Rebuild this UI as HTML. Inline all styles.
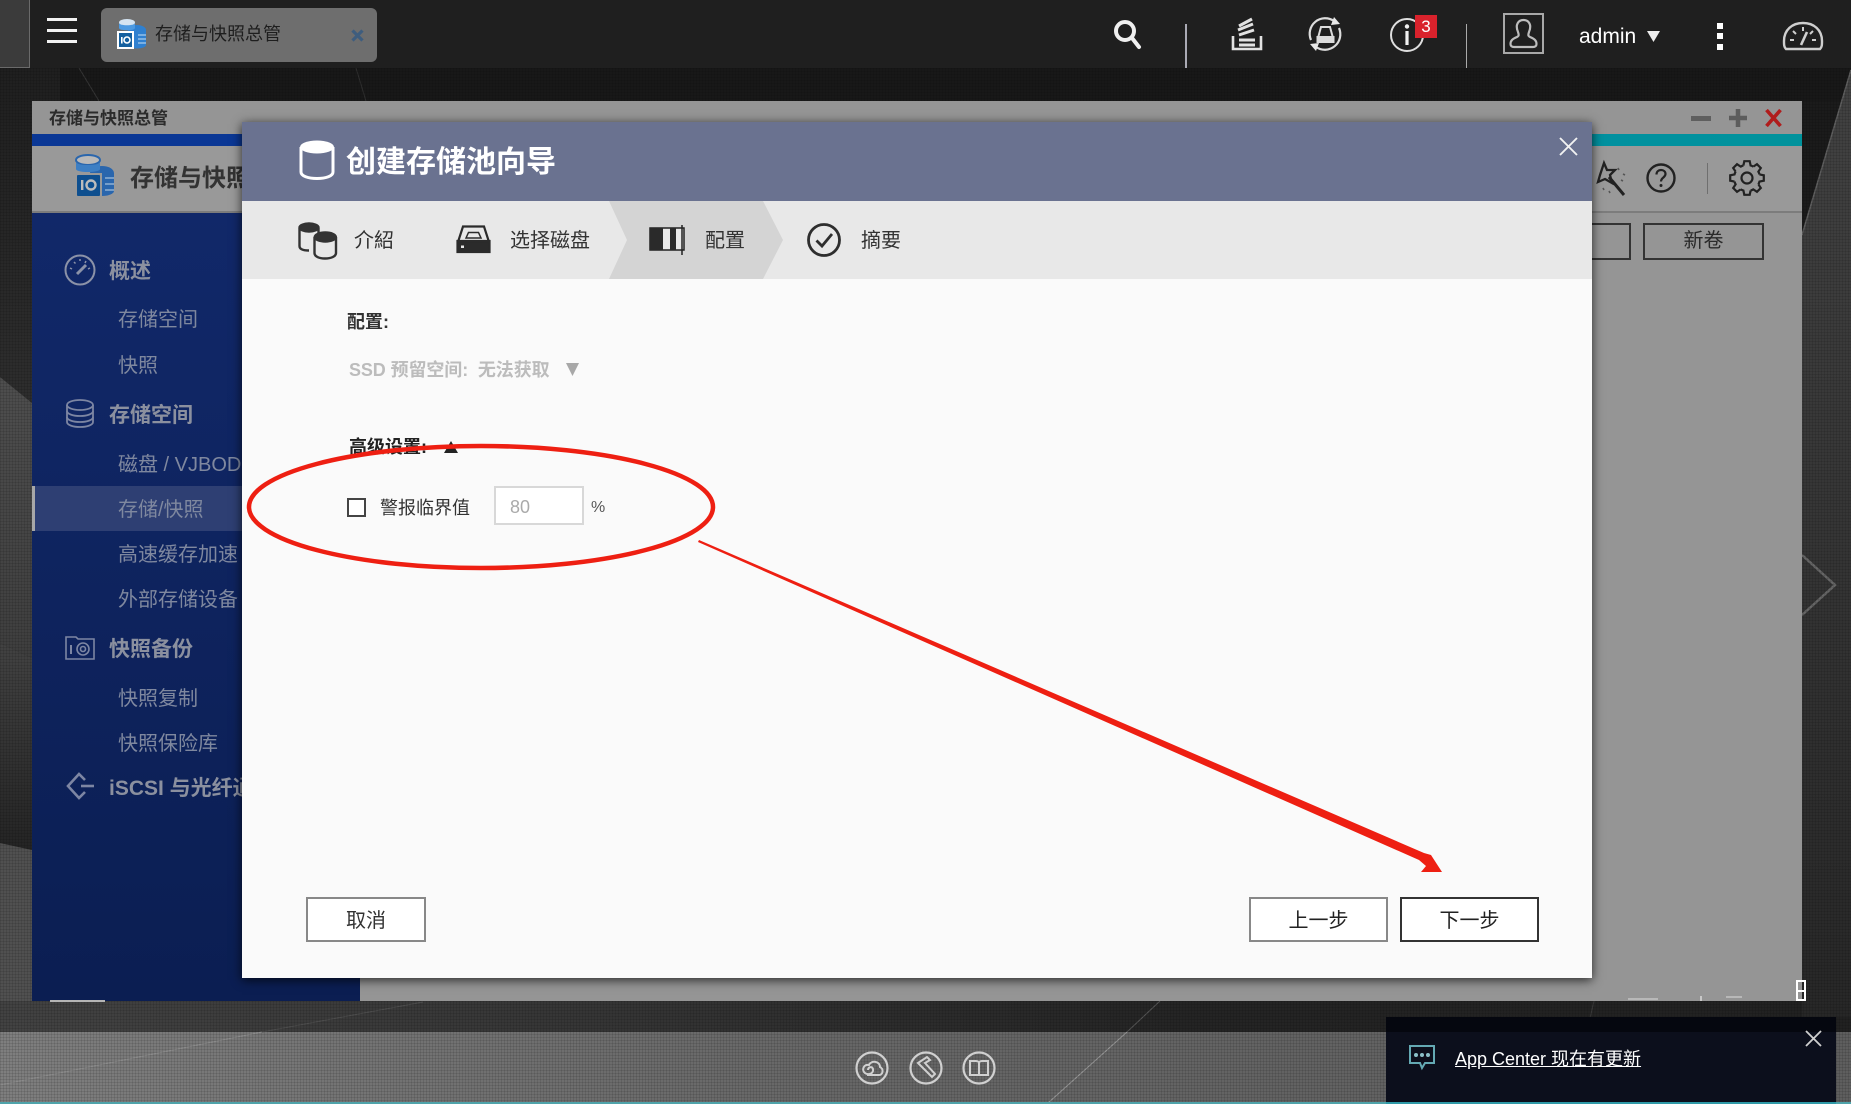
<!DOCTYPE html>
<html lang="zh"><head><meta charset="utf-8"><title>存储与快照总管</title>
<style>
html,body{margin:0;padding:0;width:1851px;height:1104px;overflow:hidden;background:#1b1b1b;font-family:"Liberation Sans","Noto Sans CJK SC",sans-serif}
.a{position:absolute}
.t{position:absolute;white-space:nowrap;line-height:1}
svg{position:absolute;overflow:visible}
.b{font-weight:700}
.s{font-size:20px;color:#7f889f;left:118px}
.h{font-size:21px;font-weight:700;color:#8b909f;left:109px}
.btn{position:absolute;box-sizing:border-box;background:#fff;border:2px solid #888;font-size:20px;color:#333;text-align:center}
</style></head><body>

<svg class="a" style="left:0;top:0" width="1851" height="1104">
<defs>
<linearGradient id="g1" x1="0" y1="0" x2="0" y2="1"><stop offset="0" stop-color="#1f1f1f"/><stop offset="1" stop-color="#2e2e2e"/></linearGradient>
<linearGradient id="g2" x1="0" y1="0" x2="0" y2="1"><stop offset="0" stop-color="#4e4e4e"/><stop offset="1" stop-color="#3e3e3e"/></linearGradient>
<linearGradient id="g3" x1="0" y1="0" x2="0" y2="1"><stop offset="0" stop-color="#424242"/><stop offset="1" stop-color="#242424"/></linearGradient>
<linearGradient id="g5" x1="0" y1="0" x2="0" y2="1"><stop offset="0" stop-color="#424242"/><stop offset=".6" stop-color="#323232"/><stop offset="1" stop-color="#272727"/></linearGradient>
<linearGradient id="g6" x1="0" y1="0" x2="1" y2="0"><stop offset="0" stop-color="#7e7e7e"/><stop offset=".45" stop-color="#666"/><stop offset="1" stop-color="#5e5e5e"/></linearGradient>
<linearGradient id="g7" x1="0" y1="0" x2="1" y2="0"><stop offset="0" stop-color="#424242"/><stop offset=".3" stop-color="#363636"/><stop offset=".65" stop-color="#242424"/><stop offset="1" stop-color="#212121"/></linearGradient>
</defs>
<rect x="0" y="68" width="1851" height="33" fill="#181818"/>
<polygon points="0,68 60,68 60,412 32,403 0,377" fill="url(#g1)"/>
<polygon points="0,377 32,403 32,658 0,643" fill="url(#g2)"/>
<polygon points="0,643 32,658 32,850 0,843" fill="url(#g3)"/>
<polygon points="0,843 32,850 32,1032 0,1032" fill="#505050"/>
<rect x="0" y="1001" width="1851" height="31" fill="url(#g7)"/>
<polygon points="1851,70 1802,235 1802,1017 1851,1017" fill="url(#g5)"/>
<line x1="1851" y1="70" x2="1802" y2="235" stroke="#5e5e5e" stroke-width="1.5"/>
<polyline points="1802,555 1835,585 1802,615" fill="none" stroke="#666" stroke-width="2.5"/>
<rect x="0" y="1032" width="1851" height="70" fill="url(#g6)"/>
<line x1="79" y1="68" x2="99" y2="101" stroke="#363636" stroke-width="1"/>
<line x1="356" y1="68" x2="366" y2="101" stroke="#303030" stroke-width="1"/>
<line x1="262" y1="1032" x2="423" y2="1002" stroke="#4e4e4e" stroke-width="1"/>
<line x1="0" y1="1085" x2="262" y2="1032" stroke="#8c8c8c" stroke-width="1"/>
<line x1="1160" y1="1001" x2="1127" y2="1032" stroke="#555" stroke-width="1"/>
<line x1="1127" y1="1032" x2="1048" y2="1103" stroke="#999" stroke-width="1"/>
<line x1="1594" y1="1001" x2="1570" y2="1104" stroke="#3a3a3a" stroke-width="1"/>
</svg>
<div class="a" style="left:0;top:68px;width:1851px;height:1036px;background-image:repeating-linear-gradient(0deg,rgba(0,0,0,.1) 0 1px,transparent 1px 3px),repeating-linear-gradient(90deg,rgba(0,0,0,.1) 0 1px,transparent 1px 3px)"></div>
<div class="a" style="left:0;top:1102px;width:1851px;height:2px;background:#4fa3aa"></div>

<!-- top bar -->
<div class="a" style="left:0;top:0;width:1851px;height:68px;background:#1f1f1f"></div>
<div class="a" style="left:0;top:0;width:29px;height:67px;background:#3b3b3b;border-right:1px solid #6a6a6a;border-bottom:1px solid #6a6a6a"></div>
<div class="a" style="left:47px;top:18px;width:30px;height:3px;background:#f2f2f2"></div>
<div class="a" style="left:47px;top:29px;width:30px;height:3px;background:#f2f2f2"></div>
<div class="a" style="left:47px;top:40px;width:30px;height:3px;background:#f2f2f2"></div>
<div class="a" style="left:101px;top:8px;width:276px;height:54px;background:#6e6e6e;border-radius:6px"></div>
<svg style="left:116px;top:18px" width="32" height="32" viewBox="0 0 32 32">
<ellipse cx="21" cy="12" rx="9" ry="5" fill="#2f80d0"/><rect x="12" y="12" width="18" height="15" fill="#2f80d0"/><ellipse cx="21" cy="27" rx="9" ry="3.500" fill="#2f80d0"/>
<path d="M22 17H30M22 21H30M22 25H30" stroke="#a9cdec" stroke-width="1.200"/>
<ellipse cx="11" cy="4.500" rx="8" ry="3.500" fill="#d4e4f2"/><path d="M3 5V10C3 13 19 13 19 10V5C19 8 3 8 3 5Z" fill="#4c9ae2"/>
<rect x="1" y="13" width="17" height="18" fill="#fff"/><rect x="3" y="15" width="13" height="14" fill="#15609f"/><rect x="5" y="19" width="1.600" height="6.500" fill="#fff"/><circle cx="11" cy="22" r="3" fill="none" stroke="#fff" stroke-width="1.600"/>
</svg>
<div class="t" style="left:155px;top:25px;font-size:18px;color:#1e1e1e">存储与快照总管</div>
<svg style="left:351px;top:29px" width="13" height="13" viewBox="0 0 13 13"><path d="M1.500 1.500L11.500 11.500M11.500 1.500L1.500 11.500" stroke="#3e5d7e" stroke-width="3.200"/></svg>

<!-- top right icons -->
<svg style="left:1112px;top:18px" width="32" height="32" viewBox="0 0 32 32" fill="none"><circle cx="13" cy="13" r="9" stroke="#f0f0f0" stroke-width="4"/><path d="M20 20L27 29" stroke="#f0f0f0" stroke-width="4" stroke-linecap="round"/></svg>
<div class="a" style="left:1185px;top:24px;width:2px;height:44px;background:#aaaab4"></div>
<svg style="left:1231px;top:17px" width="32" height="34" viewBox="0 0 32 34" fill="none" stroke="#e2e2e2"><path d="M2 19V32H30V19" stroke-width="2.600"/><path d="M8 9L21 2M7 13L22 7M8 18L23 13M8 23H24M8 28H24" stroke-width="3"/></svg>
<svg style="left:1307px;top:16px" width="36" height="36" viewBox="0 0 36 36" fill="none" stroke="#dcdcdc"><path d="M4 24A15.500 15.500 0 0 1 27 5" stroke-width="2.200"/><path d="M32 12A15.500 15.500 0 0 1 9 31" stroke-width="2.200"/><path d="M27 1L33 8L24 9Z" fill="#e8e8e8" stroke="none"/><path d="M9 35L3 28L12 27Z" fill="#e8e8e8" stroke="none"/><path d="M11 22L14 11H23L26 22Z" stroke-width="2"/><rect x="10.500" y="21" width="16" height="5" stroke-width="2" fill="#dcdcdc"/></svg>
<svg style="left:1389px;top:17px" width="36" height="36" viewBox="0 0 36 36" fill="none"><circle cx="18" cy="18" r="16" stroke="#dedede" stroke-width="2"/><circle cx="18" cy="9.500" r="2.200" fill="#f0f0f0"/><rect x="16.400" y="14" width="3.200" height="14" fill="#f0f0f0"/></svg>
<div class="a" style="left:1415px;top:15px;width:22px;height:23px;background:#d9222c"></div>
<div class="t" style="left:1415px;top:18px;width:22px;text-align:center;font-size:17px;color:#fff">3</div>
<div class="a" style="left:1466px;top:24px;width:1px;height:44px;background:#aaa"></div>
<div class="a" style="left:1503px;top:13px;width:37px;height:37px;border:2px solid #a8a8a8"></div>
<svg style="left:1505px;top:15px" width="37" height="37" viewBox="0 0 37 37" fill="none" stroke="#bdbdbd" stroke-width="2.200"><path d="M13 17C10 10 13 5 18.500 5S27 10 24 17C23 20 23 21 25 22C30 24 31.500 26 31.500 29C31.500 31 30 32 28 32H9C7 32 5.500 31 5.500 29C5.500 26 7 24 12 22C14 21 14 20 13 17Z"/></svg>
<div class="t" style="left:1579px;top:26px;font-size:21px;color:#fff">admin</div>
<svg style="left:1647px;top:31px" width="13" height="11" viewBox="0 0 13 11"><path d="M0 0H13L6.500 11Z" fill="#eee"/></svg>
<div class="a" style="left:1717px;top:23px;width:6px;height:6px;background:#fff"></div>
<div class="a" style="left:1717px;top:33px;width:6px;height:6px;background:#fff"></div>
<div class="a" style="left:1717px;top:44px;width:6px;height:6px;background:#fff"></div>
<svg style="left:1783px;top:21px" width="40" height="30" viewBox="0 0 40 30" fill="none" stroke="#cfcfcf"><path d="M3 28C1 26 1 24 1 20C1 9 9 2 20 2S39 9 39 20C39 24 39 26 37 28Z" stroke-width="2.400"/><path d="M20 6V10M7 19H11M29 19H33M10 10L13 13M30 10L27 13" stroke-width="2"/><path d="M18 24L24 11" stroke-width="2.600"/></svg>

<!-- window -->
<div class="a" style="left:32px;top:101px;width:1770px;height:900px;background:#959595"></div>
<div class="t b" style="left:49px;top:110px;font-size:17px;color:#2b2b2b">存储与快照总管</div>
<div class="a" style="left:1691px;top:116px;width:20px;height:5px;background:#5f5f5f"></div>
<svg style="left:1729px;top:109px" width="18" height="18" viewBox="0 0 18 18"><path d="M9 0V18M0 9H18" stroke="#5c5c5c" stroke-width="4.500"/></svg>
<svg style="left:1765px;top:109px" width="17" height="18" viewBox="0 0 17 18"><path d="M1.500 1L15.500 17M15.500 1L1.500 17" stroke="#b01c1c" stroke-width="3.600"/></svg>
<div class="a" style="left:32px;top:134px;width:1770px;height:12px;background:linear-gradient(90deg,#0a3795 0,#0a3795 30%,#0090a0 85%,#00929c 100%)"></div>
<div class="a" style="left:32px;top:146px;width:1770px;height:65px;background:#999"></div>
<div class="a" style="left:32px;top:211px;width:1770px;height:2px;background:#7c7c7c"></div>
<svg style="left:73px;top:154px" width="42" height="44" viewBox="0 0 42 44">
<ellipse cx="29" cy="19" rx="12" ry="7" fill="#2a66ad"/><rect x="17" y="19" width="24" height="18" fill="#2a66ad"/><ellipse cx="29" cy="37" rx="12" ry="5" fill="#2a66ad"/>
<path d="M32 24H41M32 30H41M32 36H41" stroke="#8fb1d4" stroke-width="1.500"/>
<ellipse cx="15" cy="6" rx="12" ry="5" fill="#b9b9b9" stroke="#2a66ad" stroke-width="2"/><path d="M3 8V15C3 19 27 19 27 15V8C27 12 3 12 3 8Z" fill="#3d7fc4"/>
<rect x="2" y="19" width="27" height="24" fill="#999"/><rect x="4" y="21" width="23" height="21" rx="1" fill="#0e4f8f"/><rect x="8" y="26" width="2.400" height="10" fill="#bcbcbc"/><circle cx="18" cy="31" r="4.500" fill="none" stroke="#bcbcbc" stroke-width="2.400"/>
</svg>
<div class="t b" style="left:130px;top:167px;font-size:24px;color:#333">存储与快照总管</div>
<svg style="left:1595px;top:162px" width="34" height="34" viewBox="0 0 34 34" fill="none" stroke="#222"><path d="M9 1L12 8L20 8L15 13L17 21L10 17L3 20L5 13Z" stroke-width="2.300"/><path d="M14 15L29 33" stroke-width="3"/><path d="M23 6L24 8M28 12L30 13M26 18L28 19M8 26L9 28M14 29L15 31" stroke-width="1.600" stroke="#555"/></svg>
<svg style="left:1646px;top:163px" width="30" height="30" viewBox="0 0 30 30" fill="none"><ellipse cx="15" cy="15" rx="13.500" ry="13.500" stroke="#222" stroke-width="2.400"/><path d="M10.500 11.500C10.500 8.500 12.500 7 15 7S19.500 8.500 19.500 11C19.500 14.500 15 14.500 15 18.500" stroke="#222" stroke-width="2.200"/><circle cx="15" cy="22.500" r="1.500" fill="#222"/></svg>
<div class="a" style="left:1707px;top:163px;width:1px;height:31px;background:#6f6f6f"></div>
<svg style="left:1727px;top:158px" width="40" height="40" viewBox="-20 -20 40 40" fill="none" stroke="#222" stroke-width="2.200">
<g><path d="M-3.600-12.500L-2.700-16.800L2.700-16.800L3.600-12.500A13 13 0 0 1 6.300-11.400"/></g>
<g transform="rotate(45)"><path d="M-3.600-12.500L-2.700-16.800L2.700-16.800L3.600-12.500A13 13 0 0 1 6.300-11.400"/></g>
<g transform="rotate(90)"><path d="M-3.600-12.500L-2.700-16.800L2.700-16.800L3.600-12.500A13 13 0 0 1 6.300-11.400"/></g>
<g transform="rotate(135)"><path d="M-3.600-12.500L-2.700-16.800L2.700-16.800L3.600-12.500A13 13 0 0 1 6.300-11.400"/></g>
<g transform="rotate(180)"><path d="M-3.600-12.500L-2.700-16.800L2.700-16.800L3.600-12.500A13 13 0 0 1 6.300-11.400"/></g>
<g transform="rotate(225)"><path d="M-3.600-12.500L-2.700-16.800L2.700-16.800L3.600-12.500A13 13 0 0 1 6.300-11.400"/></g>
<g transform="rotate(270)"><path d="M-3.600-12.500L-2.700-16.800L2.700-16.800L3.600-12.500A13 13 0 0 1 6.300-11.400"/></g>
<g transform="rotate(315)"><path d="M-3.600-12.500L-2.700-16.800L2.700-16.800L3.600-12.500A13 13 0 0 1 6.300-11.400"/></g>
<circle r="5.500"/></svg>
<div class="a" style="left:1560px;top:223px;width:67px;height:33px;border:2px solid #333"></div>
<div class="a" style="left:1643px;top:223px;width:117px;height:33px;border:2px solid #333"></div>
<div class="t" style="left:1643px;top:231px;width:121px;text-align:center;font-size:20px;color:#2a2a2a">新卷</div>

<!-- sidebar -->
<div class="a" style="left:32px;top:213px;width:328px;height:788px;background:linear-gradient(#112869,#0b1e52)"></div>
<div class="a" style="left:32px;top:486px;width:328px;height:45px;background:#2e3f73"></div>
<div class="a" style="left:32px;top:486px;width:3px;height:45px;background:#a8a8a8"></div>
<div class="a" style="left:50px;top:1000px;width:55px;height:2px;background:#b5b5b5"></div>
<svg style="left:64px;top:254px" width="32" height="32" viewBox="0 0 32 32" fill="none" stroke="#8b92a8"><circle cx="16" cy="16" r="14.500" stroke-width="2"/><path d="M13 20L22 11" stroke-width="3"/><path d="M6 14L8 15M10 8L11.500 9.500M16 5V7M22 7L21 9M26 14L24 15" stroke-width="1.500"/></svg>
<div class="t h" style="top:261px">概述</div>
<div class="t s" style="top:310px">存储空间</div>
<div class="t s" style="top:356px">快照</div>
<svg style="left:65px;top:399px" width="30" height="29" viewBox="0 0 30 29" fill="none" stroke="#7d86a3" stroke-width="1.800"><ellipse cx="15" cy="6" rx="13" ry="5"/><path d="M2 6V23C2 26 8 28 15 28S28 26 28 23V6"/><path d="M2 12C2 15 8 17 15 17S28 15 28 12M2 18C2 21 8 23 15 23S28 21 28 18"/></svg>
<div class="t h" style="top:405px">存储空间</div>
<div class="t s" style="top:455px">磁盘 / VJBOD</div>
<div class="t s" style="top:500px">存储/快照</div>
<div class="t s" style="top:545px">高速缓存加速</div>
<div class="t s" style="top:590px">外部存储设备</div>
<svg style="left:65px;top:635px" width="30" height="25" viewBox="0 0 30 25" fill="none" stroke="#7d86a3" stroke-width="1.600"><path d="M1 24V2H11L13 4H29V24Z"/><path d="M6 10V19" stroke-width="2"/><circle cx="18" cy="14" r="6"/><circle cx="18" cy="14" r="2.500"/></svg>
<div class="t h" style="top:639px">快照备份</div>
<div class="t s" style="top:689px">快照复制</div>
<div class="t s" style="top:734px">快照保险库</div>
<svg style="left:66px;top:772px" width="28" height="28" viewBox="0 0 28 28" fill="none" stroke="#7d86a3" stroke-width="2.600"><path d="M19 8L13 2L2 14L13 26L19 20"/><path d="M15 14H28"/></svg>
<div class="t h" style="top:778px">iSCSI 与光纤通道</div>

<!-- dialog -->
<div class="a" style="left:242px;top:122px;width:1350px;height:856px;background:#fafafa;box-shadow:0 2px 10px rgba(0,0,0,.75);overflow:hidden">
  <div class="a" style="left:0;top:0;width:1350px;height:79px;background:#6a7290"></div>
  <div class="a" style="left:0;top:79px;width:1350px;height:78px;background:#e8e8e8"></div>
  <svg style="left:0;top:79px" width="1350" height="78"><polygon points="367,0 521,0 541,39 521,78 367,78 385,39" fill="#d4d4d4"/></svg>
</div>
<svg style="left:299px;top:140px" width="36" height="40" viewBox="0 0 36 40" fill="none"><path d="M2 7V32C2 36 9 38.500 18 38.500S34 36 34 32V7" stroke="#fff" stroke-width="3"/><ellipse cx="18" cy="7" rx="17" ry="6.500" fill="#fff"/></svg>
<div class="t b" style="left:346px;top:148px;font-size:30px;color:#fff">创建存储池向导</div>
<svg style="left:1559px;top:137px" width="19" height="19" viewBox="0 0 19 19"><path d="M1 1L18 18M18 1L1 18" stroke="#f2f2f2" stroke-width="1.900"/></svg>

<svg style="left:297px;top:222px" width="42" height="38" viewBox="0 0 42 38" fill="none" stroke="#333" stroke-width="2.400"><path d="M2.500 6V24C2.500 27 6 28.500 12 28.500M21.500 6V12"/><ellipse cx="12" cy="5.500" rx="9.500" ry="4" fill="#333"/><path d="M17.500 15V31C17.500 34.500 22 36.500 28 36.500S39 34.500 39 31V15" fill="#e8e8e8"/><ellipse cx="28.300" cy="15" rx="10.500" ry="4.500" fill="#333"/></svg>
<div class="t" style="left:354px;top:231px;font-size:20px;color:#333">介紹</div>
<svg style="left:456px;top:225px" width="35" height="28" viewBox="0 0 35 28" fill="none" stroke="#2b2b2b" stroke-width="2.200"><path d="M2 17L7 1.500H28L33 17"/><path d="M10 13L12.500 7.500H22.500L25 13Z" stroke-width="1.500"/><rect x="1.500" y="16" width="32" height="11" fill="#2b2b2b"/><rect x="5" y="20.500" width="3" height="2.500" fill="#e8e8e8" stroke="none"/></svg>
<div class="t" style="left:510px;top:231px;font-size:20px;color:#333">选择磁盘</div>
<svg style="left:650px;top:225px" width="37" height="30" viewBox="0 0 37 30"><rect x="0" y="3" width="34" height="22" fill="#e8e8e8" stroke="#222" stroke-width="1.500"/><rect x="0" y="3" width="13" height="22" fill="#2a2a2a"/><rect x="20" y="3" width="6" height="22" fill="#2a2a2a"/><path d="M32 0V30" stroke="#222" stroke-width="1.500"/></svg>
<div class="t" style="left:705px;top:231px;font-size:20px;color:#333">配置</div>
<svg style="left:806px;top:222px" width="36" height="36" viewBox="0 0 36 36" fill="none" stroke="#2e2e2e"><circle cx="18" cy="18" r="15.500" stroke-width="2.800"/><path d="M10.500 18.500L16 24L26 12" stroke-width="2.800"/></svg>
<div class="t" style="left:861px;top:231px;font-size:20px;color:#333">摘要</div>

<div class="t b" style="left:347px;top:313px;font-size:18px;color:#333">配置:</div>
<div class="t b" style="left:349px;top:361px;font-size:18px;color:#bcbcbc;letter-spacing:-.1px">SSD 预留空间: &nbsp;无法获取</div>
<svg style="left:566px;top:363px" width="13" height="13" viewBox="0 0 14 14"><path d="M0 0H14L7 14Z" fill="#a8a8a8"/></svg>
<div class="t b" style="left:349px;top:438px;font-size:18px;color:#222">高级设置:</div>
<svg style="left:444px;top:441px" width="14" height="12" viewBox="0 0 14 12"><path d="M7 0L14 12H0Z" fill="#222"/></svg>
<div class="a" style="left:347px;top:498px;width:15px;height:15px;border:2px solid #444;background:#fff"></div>
<div class="t" style="left:380px;top:499px;font-size:18px;color:#333">警报临界值</div>
<div class="a" style="left:494px;top:486px;width:86px;height:35px;border:2px solid #d8d8d8;background:#fff"></div>
<div class="t" style="left:510px;top:498px;font-size:18px;color:#aaa">80</div>
<div class="t" style="left:591px;top:500px;font-size:16px;color:#555">%</div>

<div class="btn" style="left:306px;top:897px;width:120px;height:45px;line-height:44px">取消</div>
<div class="btn" style="left:1249px;top:897px;width:139px;height:45px;line-height:44px;color:#222">上一步</div>
<div class="btn" style="left:1400px;top:897px;width:139px;height:45px;line-height:44px;border-color:#333;color:#222">下一步</div>

<!-- annotations -->
<svg style="left:0;top:0" width="1851" height="1104">
<ellipse cx="481" cy="507" rx="232" ry="61" fill="none" stroke="#ee1f12" stroke-width="4.500"/>
<polygon points="699,540 1424,853 1431,855 1442,872 1421,872 1426,866 1419,860 698,542" fill="#ee1f12"/>
</svg>

<!-- bottom -->
<div class="a" style="left:1796px;top:980px;width:10px;height:21px;border:2px solid #fff;box-sizing:border-box"></div>
<div class="a" style="left:1796px;top:990px;width:10px;height:2px;background:#fff"></div>
<div class="a" style="left:1628px;top:998px;width:30px;height:2px;background:#b8b8b8"></div>
<div class="a" style="left:1700px;top:996px;width:2px;height:5px;background:#c8c8c8"></div>
<div class="a" style="left:1726px;top:996px;width:16px;height:2px;background:#b8b8b8"></div>
<svg style="left:855px;top:1050px" width="140" height="36" viewBox="0 0 140 36" fill="none" stroke="#d0d0d0" stroke-width="2.200">
<circle cx="17" cy="18" r="15.500"/><path d="M12 25H24C28 25 29 19 25 17C25 11 16 10 14 15C9 14 7 19 9 22C12 26 19 24 18 19C17 16 13 17 13 20" stroke-width="2"/>
<circle cx="71" cy="18" r="15.500"/><path d="M63 13L72 7L75 10L70 13L80 24L77 27L66 16Z" stroke-width="2"/>
<circle cx="124" cy="18" r="15.500"/><path d="M115 11H121C123 11 124 12 124 13C124 12 125 11 127 11H133V25H115ZM124 13V25" stroke-width="2"/>
</svg>
<div class="a" style="left:1386px;top:1017px;width:450px;height:15px;background:#05070f"></div>
<div class="a" style="left:1386px;top:1032px;width:450px;height:70px;background:#0c0f1c"></div>
<div class="a" style="left:1386px;top:1102px;width:450px;height:2px;background:#2f9aa8"></div>
<svg style="left:1409px;top:1045px" width="26" height="25" viewBox="0 0 26 25" fill="none"><path d="M1 1H25V18H16L13 23L11 18H1Z" stroke="#64a9b3" stroke-width="2"/><circle cx="7" cy="10" r="2" fill="#8bc0c8"/><circle cx="13" cy="10" r="2" fill="#8bc0c8"/><circle cx="19" cy="10" r="2" fill="#8bc0c8"/></svg>
<div class="t" style="left:1455px;top:1050px;font-size:18px;color:#fff;text-decoration:underline">App Center 现在有更新</div>
<svg style="left:1806px;top:1031px" width="15" height="15" viewBox="0 0 15 15"><path d="M0 0L15 15M15 0L0 15" stroke="#d0d0d0" stroke-width="1.800"/></svg>
</body></html>
